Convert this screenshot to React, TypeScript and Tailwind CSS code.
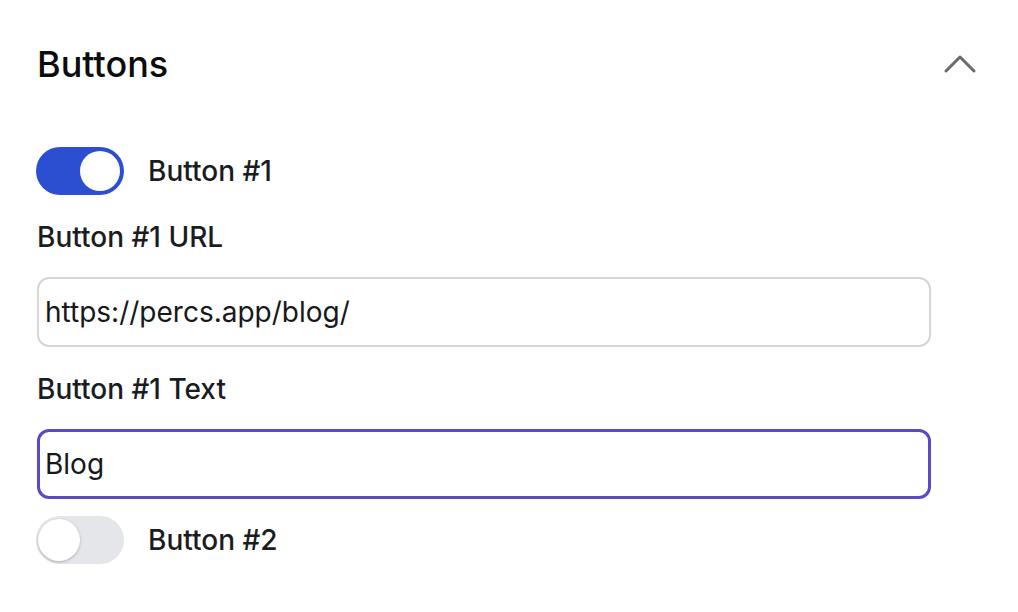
import { ChevronUp } from "lucide-react";

function Toggle({ on, label }: { on: boolean; label: string }) {
  return (
    <div className="ml-[-1px] flex items-center gap-[24px]">
      <div
        className={
          on
            ? "flex h-[48px] w-[88px] items-center justify-end rounded-full bg-[#2c4fd2] p-[4px]"
            : "flex h-[48px] w-[88px] items-center justify-start rounded-full bg-[#e5e6e9] p-[2px]"
        }
      >
        <span
          className={
            on
              ? "h-[40px] w-[40px] rounded-full bg-white"
              : "h-[42px] w-[42px] rounded-full bg-white shadow-[0_1px_3px_rgba(0,0,0,0.25)]"
          }
        />
      </div>
      <span className="text-[28px] font-medium leading-[32px] text-[#1b1c1f]">{label}</span>
    </div>
  );
}

export default function App() {
  return (
    <div className="min-h-screen bg-white font-['Inter','Liberation_Sans',sans-serif]">
      <div className="pl-[37px] pr-[87px] pt-[42px]">
        <div className="flex items-center justify-between">
          <h2 className="text-[36px] font-medium leading-[44px] text-[#0c0c0d]">Buttons</h2>
          <ChevronUp className="my-[-6px] mr-[-57px] h-[56px] w-[56px] text-[#6b6b6b]" strokeWidth={1.3} />
        </div>

        <div className="mt-[61px] flex flex-col">
          <Toggle on label="Button #1" />

          <label className="mt-[26px] text-[28px] font-medium leading-[32px] text-[#1b1c1f]">Button #1 URL</label>
          <input
            readOnly
            value="https://percs.app/blog/"
            className="mt-[24px] h-[70px] w-full rounded-[12px] border-2 border-[#d6d6d6] px-[6px] text-[28px] text-[#17181a] outline-none"
          />

          <label className="mt-[26px] text-[28px] font-medium leading-[32px] text-[#1b1c1f]">Button #1 Text</label>
          <input
            readOnly
            value="Blog"
            className="mt-[24px] h-[70px] w-full rounded-[12px] border-[3px] border-[#5a4ac3] px-[5px] text-[28px] text-[#17181a] outline-none"
          />

          <div className="mt-[17px]">
            <Toggle on={false} label="Button #2" />
          </div>
        </div>
      </div>
    </div>
  );
}
